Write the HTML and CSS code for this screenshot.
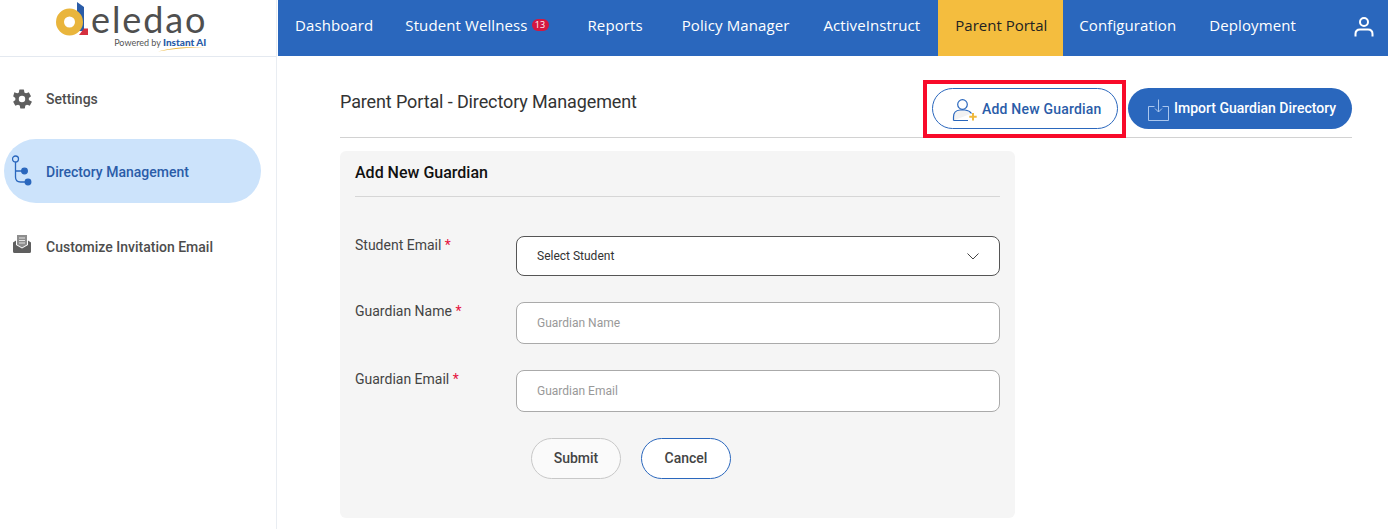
FILE: index.html
```html
<!DOCTYPE html>
<html lang="en">
<head>
    <meta charset="UTF-8">
    <meta name="viewport" content="width=device-width, initial-scale=1.0">
    <title>Parent Portal - Directory Management</title>
    <link rel="stylesheet" href="styles.css">
</head>
<body>
    <div class="page">
        <aside class="sidebar">
            <div class="logo">
                <svg class="logo-mark" width="32" height="34" viewBox="0 0 32 34">
                    <path d="M21 0 L28 5 V29 H21 Z" fill="#2a5ca8"/>
                    <circle cx="13.500" cy="20" r="9.500" fill="none" stroke="#e9b53c" stroke-width="8"/>
                    <path d="M28 26.500 H32 V33 H23 Z" fill="#d5303f"/>
                </svg>
                <div class="logo-text">
                    <span class="logo-name">eledao</span>
                    <span class="logo-sub">Powered by <b>Instant AI</b></span>
                    <svg class="logo-swoosh" width="48" height="6" viewBox="0 0 48 6">
                        <path d="M0 5.500 C12 1.500 30 .5 48 1 C30 1.500 14 3 0 5.500 Z" fill="#e9b53c"/>
                    </svg>
                </div>
            </div>
            <nav class="side-nav">
                <a class="side-item side-settings">
                    <svg width="22" height="22" viewBox="0 0 24 24"><path fill="#5f5f5f" d="M19.400 13c.1-.3.1-.7.1-1s0-.7-.1-1l2.200-1.700c.2-.2.3-.4.1-.7l-2.100-3.600c-.1-.2-.4-.3-.6-.2l-2.600 1c-.5-.4-1.100-.8-1.800-1l-.4-2.700c0-.3-.2-.5-.5-.5H9.500c-.3 0-.5.2-.5.5l-.4 2.700c-.6.3-1.200.6-1.800 1l-2.600-1c-.2-.1-.5 0-.6.2L2.500 8.600c-.2.3-.1.5.1.7L4.800 11c-.1.300-.1.700-.1 1s0 .7.1 1l-2.200 1.700c-.2.2-.3.4-.1.7l2.100 3.600c.1.200.4.300.6.200l2.600-1c.5.4 1.100.8 1.800 1l.4 2.700c0 .3.2.5.5.5h4.200c.3 0 .5-.2.5-.5l.4-2.700c.6-.3 1.200-.6 1.800-1l2.600 1c.2.1.5 0 .6-.2l2.100-3.600c.2-.3.1-.5-.1-.7zM12 15.500a3.500 3.500 0 1 1 0-7 3.500 3.500 0 0 1 0 7z"/></svg>
                    <span>Settings</span>
                </a>
                <a class="side-item side-active">
                    <svg width="24" height="34" viewBox="0 0 24 34" fill="none" stroke="#2a67bd" stroke-width="1.300"><circle cx="3.500" cy="5" r="3"/><path d="M3.500 8 V23 Q3.500 28 8.500 28 H14 M3.500 17 H10"/><circle cx="12.500" cy="17" r="2.800" fill="#2a67bd"/><circle cx="16" cy="28" r="2.800" fill="#2a67bd"/></svg>
                    <span>Directory Management</span>
                </a>
                <a class="side-item side-email">
                    <svg width="20" height="20" viewBox="0 0 20 20"><path fill="#5f5f5f" d="M1 8.500 L4 6.500 V11 L10 14.500 L16 11 V6.500 L19 8.500 V17.500 Q19 19 17.500 19 H2.500 Q1 19 1 17.500 Z"/><path fill="#8d8d8d" d="M5 1 H15 V10.500 L10 13.500 L5 10.500 Z"/><path stroke="#e4e4e4" stroke-width="1" d="M7 4 H13 M7 6.500 H13 M7 9 H13"/></svg>
                    <span>Customize Invitation Email</span>
                </a>
            </nav>
        </aside>

        <div class="content">
            <header class="topbar">
                <a class="top-link top-first">Dashboard</a>
                <a class="top-link top-wellness">Student Wellness <span class="badge">13</span></a>
                <a class="top-link top-reports">Reports</a>
                <a class="top-link">Policy Manager</a>
                <a class="top-link top-instruct">ActiveInstruct</a>
                <a class="top-link top-active">Parent Portal</a>
                <a class="top-link top-config">Configuration</a>
                <a class="top-link">Deployment</a>
                <svg class="top-user" width="20" height="22" viewBox="0 0 20 22" fill="none" stroke="#fff" stroke-width="2"><circle cx="10" cy="6" r="4"/><path d="M1.500 20.500 V18 Q1.500 13.500 6 13.500 H14 Q18.500 13.500 18.500 18 V20.500"/></svg>
            </header>

            <main class="main">
                <div class="page-head">
                    <h1>Parent Portal - Directory Management</h1>
                    <div class="head-actions">
                        <div class="highlight-box">
                            <button class="btn-add">
                                <svg width="26" height="24" viewBox="0 0 26 24" fill="none" stroke="#2a67bd" stroke-width="1.200"><circle cx="10.500" cy="7.500" r="4.800"/><path d="M1.500 23.500 V20 Q1.500 13.500 8 13 H13 Q17.500 13.500 19.500 16.500 M1.500 23.500 H16" fill="#f2f2f2"/><path d="M21 16 V23.500 M17.300 19.800 H24.700" stroke="#f0b93c" stroke-width="2"/></svg>
                                Add New Guardian
                            </button>
                        </div>
                        <button class="btn-import">
                            <svg width="21" height="24" viewBox="0 0 21 24" fill="none" stroke="#a9c6ee" stroke-width="1"><path d="M6.500 9.500 H.5 V23.500 H20.500 V9.500 H14.500"/><path d="M10.500 2.500 V15 M7 11.500 L10.500 15 L14 11.500"/></svg>
                            <span class="import-label">Import Guardian Directory</span>
                        </button>
                    </div>
                </div>

                <form class="card">
                    <h2>Add New Guardian</h2>
                    <div class="form-row">
                        <label>Student Email <span class="req">*</span></label>
                        <div class="field field-select">
                            <span>Select Student</span>
                            <svg width="12" height="7" viewBox="0 0 12 7" fill="none" stroke="#444" stroke-width="1"><path d="M.5 .5 L6 6 L11.500 .5"/></svg>
                        </div>
                    </div>
                    <div class="form-row">
                        <label>Guardian Name <span class="req">*</span></label>
                        <input class="field" type="text" placeholder="Guardian Name">
                    </div>
                    <div class="form-row">
                        <label>Guardian Email <span class="req">*</span></label>
                        <input class="field" type="text" placeholder="Guardian Email">
                    </div>
                    <div class="form-buttons">
                        <button type="button" class="btn-submit">Submit</button>
                        <button type="button" class="btn-cancel">Cancel</button>
                    </div>
                </form>
            </main>
        </div>
    </div>
</body>
</html>
```

FILE: styles.css
```css
* {
    box-sizing: border-box;
}
html, body {
    height: 100%;
}
body {
    margin: 0;
    font-family: Roboto, Arial, sans-serif;
    background-color: white;
    color: #444;
    overflow: hidden;
}
.page {
    display: flex;
    height: 529px;
}

/* sidebar */
.sidebar {
    width: 277px;
    margin-right: 1px;
    flex-shrink: 0;
    border-right: 1px solid #e9edf2;
}
.logo {
    height: 57px;
    border-bottom: 1px solid #e4e9f0;
    display: flex;
    align-items: flex-start;
    padding: 2px 0 0 56px;
    gap: 3px;
}
.logo-mark {
    flex-shrink: 0;
}
.logo-text {
    position: relative;
    display: flex;
    flex-direction: column;
    align-items: flex-end;
}
.logo-name {
    font-family: Lato, sans-serif;
    font-size: 36px;
    line-height: 36px;
    letter-spacing: 1.900px;
    color: #4f4f4f;
    margin-top: -1px;
}
.logo-sub {
    font-family: Lato, sans-serif;
    font-size: 9px;
    line-height: 10px;
    color: #555;
    margin-right: 1px;
}
.logo-sub b {
    color: #2a5ca8;
    font-weight: 900;
    font-size: 10px;
}
.logo-swoosh {
    position: absolute;
    right: 1px;
    top: 44px;
}
.side-nav {
    display: flex;
    flex-direction: column;
    padding-top: 10px;
}
.side-item {
    display: flex;
    align-items: center;
    font-size: 14px;
    font-weight: 500;
    color: #4d4d4d;
    height: 64px;
    padding-left: 12px;
    gap: 14px;
}
.side-settings {
    margin-bottom: 8px;
    padding-left: 11px;
    gap: 13px;
}
.side-active {
    margin: 0 15px 12px 4px;
    padding-left: 8px;
    gap: 10px;
    background-color: #cce3fb;
    border-radius: 32px;
    color: #2a5ca8;
}
.side-active span {
    padding-top: 2px;
}
.side-email svg {
    margin-bottom: 7px;
}

/* top navigation */
.content {
    flex: 1;
    min-width: 0;
}
.topbar {
    height: 56px;
    background-color: #2a67bd;
    display: flex;
    align-items: stretch;
}
.top-link {
    display: flex;
    align-items: center;
    gap: 4px;
    padding: 0 16px 7px 17px;
    color: white;
    font-family: "Open Sans", sans-serif;
    font-size: 15px;
    letter-spacing: .1px;
    white-space: nowrap;
}
.top-first {
    padding-right: 15px;
}
.top-wellness {
    padding-right: 22px;
}
.top-reports {
    padding-right: 22px;
}
.top-instruct {
    padding-left: 18px;
    padding-right: 18px;
}
.top-active {
    background-color: #f4bd3e;
    color: #222;
    letter-spacing: 0;
}
.top-config {
    padding-left: 16px;
}
.badge {
    background-color: #d5173f;
    color: white;
    font-size: 9px;
    line-height: 12px;
    letter-spacing: 0;
    width: 17px;
    text-align: center;
    border-radius: 6px;
}
.top-user {
    margin: 16px 14px 0 auto;
}

/* main area */
.main {
    padding: 24px 36px 0 62px;
}
.page-head {
    display: flex;
    justify-content: space-between;
    height: 58px;
    border-bottom: 1px solid #d2d2d2;
}
.page-head h1 {
    margin: 10px 0 0;
    font-size: 18px;
    line-height: 24px;
    font-weight: 400;
    letter-spacing: -.12px;
    color: #333;
}
.head-actions {
    display: flex;
    align-items: flex-start;
    gap: 2px;
}
.highlight-box {
    border: 4px solid #f80a2a;
    width: 203px;
    height: 58px;
    padding: 4px 0 0 5px;
}
button {
    font-family: Roboto, Arial, sans-serif;
}
.btn-add, .btn-import {
    height: 41px;
    border-radius: 21px;
    display: flex;
    align-items: center;
    font-size: 14px;
    font-weight: 500;
}
.btn-add {
    width: 186px;
    padding: 0 0 0 19px;
    gap: 4px;
    background-color: white;
    border: 1px solid #2a67bd;
    color: #2a5ca8;
    letter-spacing: .2px;
}
.btn-import {
    width: 224px;
    margin-top: 8px;
    padding: 0 0 0 20px;
    gap: 5px;
    background-color: #2a67bd;
    border: none;
    color: white;
}
.import-label {
    padding-bottom: 2px;
}

/* form card */
.card {
    width: 675px;
    height: 367px;
    margin-top: 13px;
    padding: 0 15px;
    background-color: #f5f5f5;
    border-radius: 6px;
}
.card h2 {
    margin: 0 0 39px;
    height: 46px;
    border-bottom: 1px solid #d6d6d6;
    font-size: 16px;
    line-height: 43px;
    font-weight: 500;
    color: #111;
}
.form-row {
    display: flex;
    align-items: flex-start;
    height: 68px;
}
.form-row label {
    width: 161px;
    flex-shrink: 0;
    font-size: 14px;
    line-height: 18px;
    color: #444;
}
.req {
    color: #e5133f;
}
.field {
    width: 484px;
    height: 42px;
    padding: 0 20px;
    background-color: white;
    border: 1px solid #aaa;
    border-radius: 8px;
    font-family: Roboto, Arial, sans-serif;
    font-size: 12px;
}
.field::placeholder {
    color: #999;
}
.field-select {
    display: flex;
    align-items: center;
    justify-content: space-between;
    height: 40px;
    border-color: #555;
    color: #333;
}
.form-row:first-of-type {
    height: 66px;
}
.form-buttons {
    display: flex;
    gap: 20px;
    margin-left: 176px;
}
.btn-submit, .btn-cancel {
    width: 90px;
    height: 41px;
    padding-bottom: 3px;
    border-radius: 21px;
    font-size: 14px;
    font-weight: 500;
    color: #444;
}
.btn-submit {
    background-color: #fafafa;
    border: 1px solid #c8c8c8;
}
.btn-cancel {
    background-color: white;
    border: 1px solid #2a67bd;
}
```
